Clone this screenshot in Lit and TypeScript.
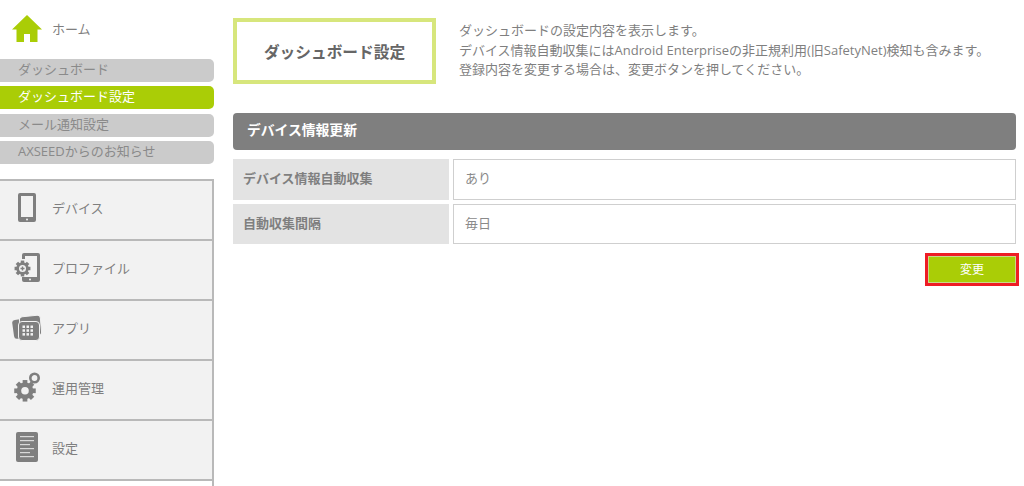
import { LitElement, html, css, svg } from "lit";
import { customElement } from "lit/decorators.js";

const gear = (cx: number, cy: number, r: number, hole: number, teeth = 8) => {
  const t = [];
  for (let i = 0; i < teeth; i++) {
    const a = (360 / teeth) * i;
    t.push(svg`<rect x=${cx - r * 0.28} y=${cy - r * 1.28} width=${r * 0.56} height=${r * 0.6} transform="rotate(${a} ${cx} ${cy})"></rect>`);
  }
  return svg`<g fill="#7f7f7f">${t}<circle cx=${cx} cy=${cy} r=${r}></circle><circle cx=${cx} cy=${cy} r=${hole} fill="#f2f2f2"></circle></g>`;
};

const dots = [0, 1, 2].flatMap((r) =>
  [0, 1, 2].map((c) => svg`<rect x=${10.5 + c * 4} y=${11.5 + r * 3.8} width="2.5" height="2.5" fill="#f2f2f2"></rect>`)
);

const icons: Record<string, unknown> = {
  device: html`<svg width="18" height="29" viewBox="0 0 18 29"><path fill="#7f7f7f" fill-rule="evenodd" d="M2 0h14a2 2 0 0 1 2 2v25a2 2 0 0 1-2 2H2a2 2 0 0 1-2-2V2a2 2 0 0 1 2-2zM3 3v21h12V3z"/><circle cx="9" cy="26.500" r="1" fill="#f2f2f2"/></svg>`,
  profile: html`<svg width="26" height="29" viewBox="0 0 26 29"><path fill="#7f7f7f" fill-rule="evenodd" d="M10 0h14a2 2 0 0 1 2 2v25a2 2 0 0 1-2 2H10a2 2 0 0 1-2-2v-3h15V3H11v3H8V2a2 2 0 0 1 2-2z"/>${gear(8.500, 15.500, 6.200, 3.500)}<path d="M6.500 15.500h4M8.500 13.500v4" stroke="#7f7f7f" stroke-width="1.400"/><circle cx="16" cy="26.500" r="1" fill="#f2f2f2"/></svg>`,
  app: html`<svg width="30" height="27" viewBox="0 0 30 27"><rect x="1" y="5" width="19" height="19" rx="3" fill="#7f7f7f" transform="rotate(-8 10 14)"/><rect x="8" y="2" width="21" height="20" rx="3" fill="#7f7f7f" stroke="#f2f2f2" stroke-width="1" transform="rotate(-5 18 12)"/><rect x="6.500" y="7.500" width="21" height="19" rx="3.500" fill="#7f7f7f" stroke="#f2f2f2" stroke-width="1"/>${dots}</svg>`,
  ops: html`<svg width="27" height="30" viewBox="0 0 27 30">${gear(11, 18.800, 8.400, 3.800)}<circle cx="20.500" cy="6" r="4.200" fill="none" stroke="#7f7f7f" stroke-width="2.600"/></svg>`,
  settings: html`<svg width="22" height="30" viewBox="0 0 22 30"><rect width="22" height="30" rx="2" fill="#7f7f7f"/><g fill="#d9d9d9"><rect x="4" y="4" width="14" height="1.200"/><rect x="4" y="8" width="14" height="1.200"/><rect x="4" y="12" width="10" height="1.200"/><rect x="4" y="16" width="14" height="1.200"/><rect x="4" y="20" width="10" height="1.200"/><rect x="4" y="24" width="14" height="1.200"/></g></svg>`,
};

@customElement("app-root")
export class AppRoot extends LitElement {
  static styles = css`
    :host {
      display: block;
      height: 486px;
      overflow: hidden;
      background: #fff;
      font-family: "Open Sans", "Noto Sans CJK JP", sans-serif;
      color: #7f7f7f;
    }
    .page { display: flex; align-items: flex-start; }
    .side { width: 214px; flex: none; }
    .home { display: flex; align-items: center; height: 56px; padding: 0 0 3px 12px; font-size: 13px; gap: 10px; color: #7f7f7f; }
    .subs { display: flex; flex-direction: column; gap: 4.33px; }
    .sub { height: 23px; line-height: 21px; background: #cbcbcb; border-radius: 0 5px 5px 0; padding-left: 18px; font-size: 13px; color: #8a8a8a; }
    .sub.on { background: #aacd06; color: #fff; }
    .menu { margin-top: 15px; border-right: 2px solid #b9b9b9; }
    .item { height: 53px; padding-bottom: 5px; background: #f2f2f2; border-top: 2px solid #b9b9b9; display: flex; align-items: center; font-size: 13px; color: #7f7f7f; box-sizing: content-box; }
    .ico { width: 52px; flex: none; display: flex; justify-content: center; padding-left: 2px; box-sizing: border-box; }
    .tail { height: 10px; border-top: 2px solid #b9b9b9; }
    .main { flex: 1; padding: 18px 8px 0 19px; min-width: 0; }
    .top { display: flex; }
    .title { width: 195px; height: 58px; box-sizing: content-box; border: 4px solid #d7e67c; display: flex; align-items: center; justify-content: center; font-size: 15.700px; font-weight: 700; color: #666; flex: none; }
    .desc { margin-left: 23px; padding-top: 3px; font-size: 13px; line-height: 19.500px; color: #7f7f7f; white-space: nowrap; }
    .band { margin-top: 29px; height: 37px; background: #7f7f7f; border-radius: 4px; color: #fff; font-size: 13.800px; font-weight: 700; line-height: 34px; padding-left: 14px; }
    .rows { margin-top: 9px; display: flex; flex-direction: column; gap: 4px; }
    .row { display: flex; gap: 4px; height: 40.500px; }
    .label { width: 216px; flex: none; background: #e3e3e3; font-size: 13px; font-weight: 700; color: #7f7f7f; display: flex; align-items: center; padding: 0 0 3px 10px; box-sizing: border-box; }
    .val { flex: 1; border: 1px solid #cfcfcf; box-sizing: border-box; display: flex; align-items: center; padding: 0 0 3px 11px; font-size: 13px; color: #8a8a8a; }
    .acts { display: flex; justify-content: flex-end; margin-top: 9px; margin-right: -3px; }
    .btn { width: 94px; height: 33px; box-sizing: border-box; border: 3px solid #ee1c25; background: #aacd06; color: #fff; font-size: 12px; display: flex; align-items: center; justify-content: center; box-shadow: inset 0 0 0 1px #c9d98a; padding-bottom: 2px; }
  `;

  render() {
    const items = [
      ["device", "デバイス"],
      ["profile", "プロファイル"],
      ["app", "アプリ"],
      ["ops", "運用管理"],
      ["settings", "設定"],
    ];
    return html`<div class="page">
      <nav class="side">
        <div class="home">
          <svg width="30" height="27" viewBox="0 0 30 27"><path fill="#aacd06" d="M15 0 30 14.500h-4.500V27H18v-8h-6v8H4.500V14.500H0z"/></svg>
          <span>ホーム</span>
        </div>
        <div class="subs">
          <div class="sub">ダッシュボード</div>
          <div class="sub on">ダッシュボード設定</div>
          <div class="sub">メール通知設定</div>
          <div class="sub">AXSEEDからのお知らせ</div>
        </div>
        <div class="menu">
          ${items.map(([k, t]) => html`<div class="item"><span class="ico">${icons[k]}</span><span>${t}</span></div>`)}
          <div class="tail"></div>
        </div>
      </nav>
      <main class="main">
        <div class="top">
          <div class="title">ダッシュボード設定</div>
          <div class="desc">ダッシュボードの設定内容を表示します。<br />デバイス情報自動収集にはAndroid Enterpriseの非正規利用(旧SafetyNet)検知も含みます。<br />登録内容を変更する場合は、変更ボタンを押してください。</div>
        </div>
        <div class="band">デバイス情報更新</div>
        <div class="rows">
          <div class="row"><div class="label">デバイス情報自動収集</div><div class="val">あり</div></div>
          <div class="row"><div class="label">自動収集間隔</div><div class="val">毎日</div></div>
        </div>
        <div class="acts"><div class="btn">変更</div></div>
      </main>
    </div>`;
  }
}
